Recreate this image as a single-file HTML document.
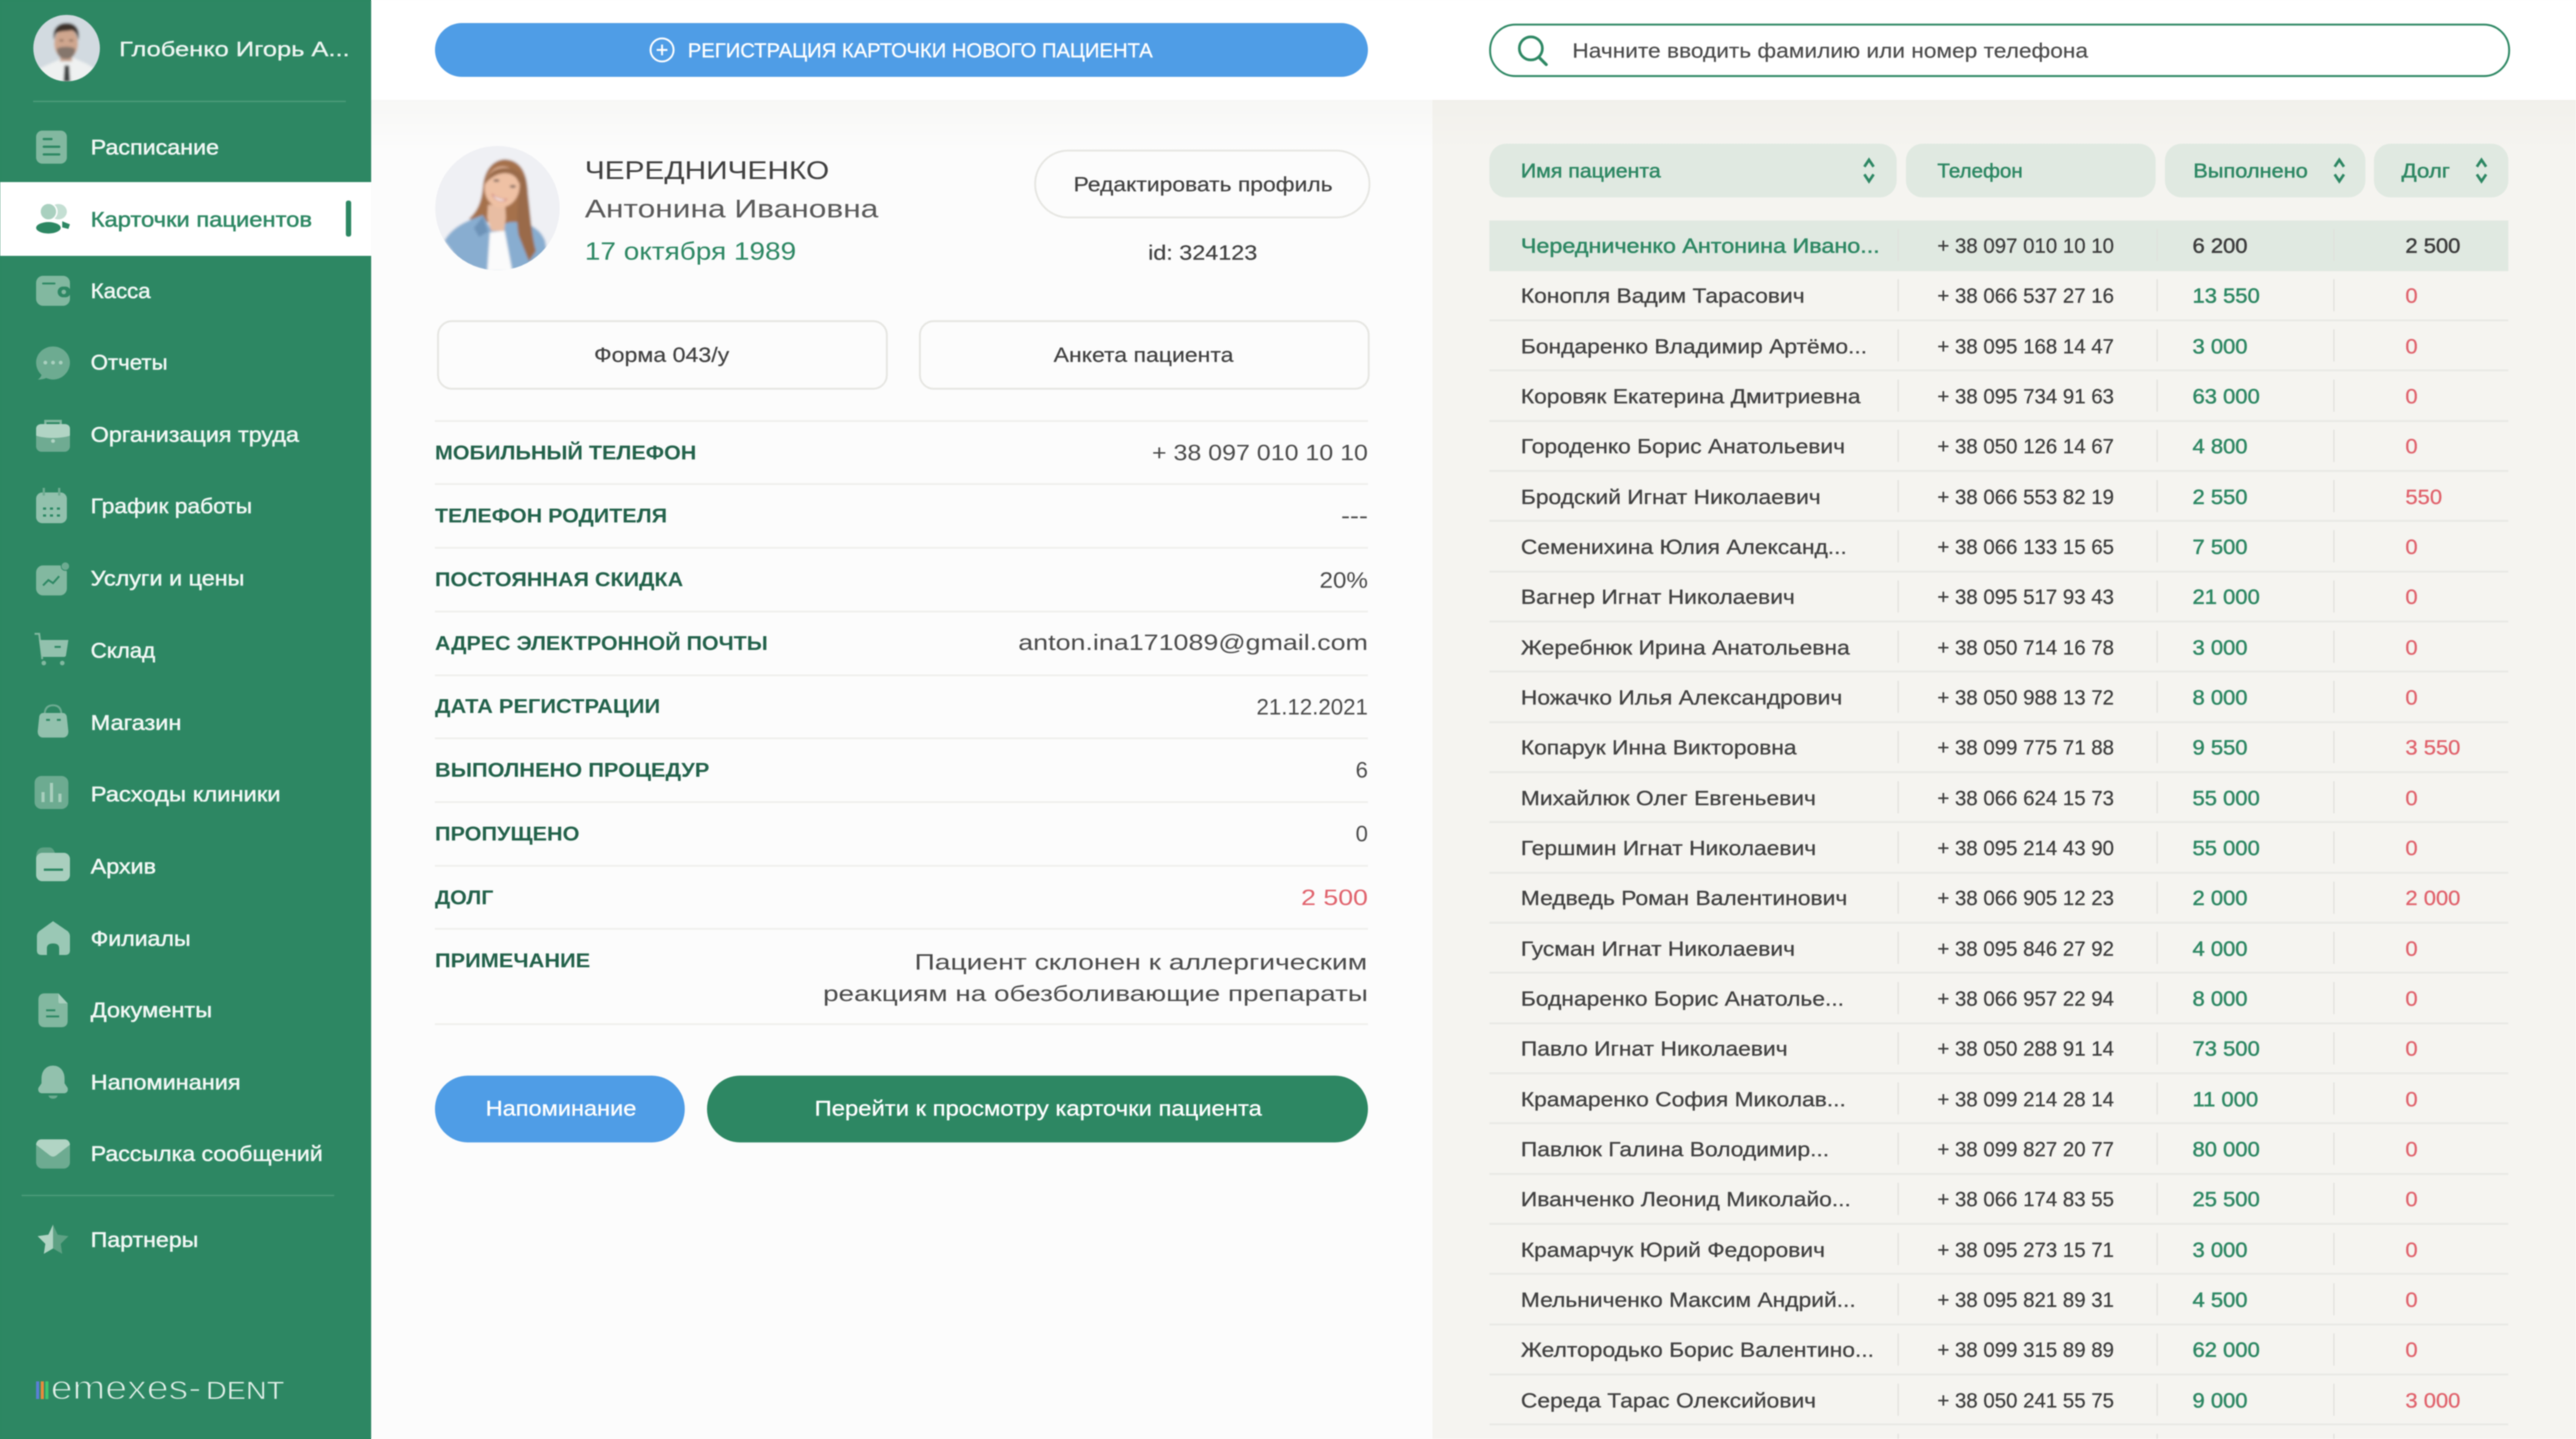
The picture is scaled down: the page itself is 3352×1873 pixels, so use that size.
<!DOCTYPE html>
<html lang="ru"><head><meta charset="utf-8"><title>Карточки пациентов</title>
<style>
html,body{margin:0;padding:0;width:3352px;height:1873px;overflow:hidden;background:linear-gradient(90deg,#2d8763 483px,#fcfcfc 483px)}
svg{display:block;font-family:"Liberation Sans","DejaVu Sans",sans-serif;filter:blur(.7px)}
.nav text{font-size:28px;fill:#f2f8f5;stroke:#f2f8f5;stroke-width:.6}
.lab text{font-size:25.5px;font-weight:bold;fill:#22614a}
.val text{font-size:29px;fill:#4a4a4a}
.names text{font-size:27px;fill:#404040;stroke:#404040;stroke-width:.35}
.ph text{font-size:27px;fill:#3c3c3c;stroke:#3c3c3c;stroke-width:.3}
.done text{font-size:27px;fill:#2d8763;stroke:#2d8763;stroke-width:.6}
.debt text{font-size:27px;fill:#e0626c;stroke:#e0626c;stroke-width:.35}
.hd text{font-size:26px;fill:#2d8763;stroke:#2d8763;stroke-width:.6}
</style></head><body>
<svg width="3352" height="1873" viewBox="0 0 3352 1873" xmlns="http://www.w3.org/2000/svg">
<defs>
<linearGradient id="gl" x1="0" y1="0" x2="0" y2="1"><stop offset="0" stop-color="#f7f7f5"/><stop offset="1" stop-color="#fcfcfc"/></linearGradient>
<linearGradient id="gr" x1="0" y1="0" x2="0" y2="1"><stop offset="0" stop-color="#f1f0eb"/><stop offset="1" stop-color="#f5f4f0"/></linearGradient>
<clipPath id="cm"><circle cx="170" cy="158" r="130"/></clipPath>
<clipPath id="cw"><circle cx="262" cy="273" r="243"/></clipPath>
<filter id="soft" x="-5%" y="-5%" width="110%" height="110%"><feGaussianBlur stdDeviation="5"/></filter>
</defs>
<rect width="3352" height="1873" fill="#fff"/>
<rect x="483" y="130" width="1381" height="1743" fill="#fcfcfc"/>
<rect x="483" y="130" width="1381" height="70" fill="url(#gl)"/>
<rect x="1864" y="130" width="1488" height="1743" fill="#f5f4f0"/>
<rect x="1864" y="130" width="1488" height="70" fill="url(#gr)"/>

<!-- sidebar -->
<rect width="483" height="1873" fill="#2d8763"/>
<rect y="237" width="483" height="96" fill="#fff"/>
<rect x="450" y="261" width="7" height="47" rx="3" fill="#2d8763"/>
<rect x="43" y="131" width="407" height="2" fill="#4a9a79"/>
<rect x="28" y="1555" width="407" height="2" fill="#4a9a79"/>

<!-- doctor avatar -->
<g clip-path="url(#cm)" transform="translate(30 10) scale(.3333)">
<g filter="url(#soft)">
<rect x="0" y="0" width="340" height="300" fill="#d2dae0"/>
<path d="M60 240C110 215 140 205 165 190L195 195C225 210 260 220 285 245V300H60Z" fill="#eff1f1"/>
<rect x="145" y="170" width="46" height="40" fill="#c7a593"/>
<ellipse cx="168" cy="140" rx="46" ry="62" fill="#cfa68e"/>
<path d="M120 125C112 80 140 58 172 60C205 60 225 85 216 128C212 108 205 92 190 88C170 92 145 90 132 98C125 105 124 115 120 125Z" fill="#3d3029"/>
<path d="M132 160C145 150 190 150 203 160C205 190 185 200 168 200C150 200 132 190 132 160Z" fill="#85766c"/>
<ellipse cx="150" cy="128" rx="8" ry="3" fill="#5e4638"/><ellipse cx="188" cy="128" rx="8" ry="3" fill="#5e4638"/>
<path d="M162 225H180L184 290H158Z" fill="#3a3d3e"/>
</g></g>
<text x="155" y="73" font-size="27" textLength="300" lengthAdjust="spacingAndGlyphs" fill="#eef6f2" stroke="#eef6f2" stroke-width=".4">Глобенко Игорь А...</text>

<!-- nav icons -->
<g>
<!-- 1 schedule -->
<rect x="47" y="170" width="40" height="43" rx="8" fill="#82b8a0"/>
<path d="M57 181H67M57 191H77M57 201H77" stroke="#2d8763" stroke-width="3" stroke-linecap="round" fill="none"/>
<!-- 2 patients -->
<ellipse cx="76" cy="275.500" rx="11" ry="10" fill="#c4dfd3"/>
<circle cx="63" cy="275.500" r="11" fill="#a9d0bf" stroke="#fff" stroke-width="2"/>
<ellipse cx="63" cy="296.500" rx="16" ry="7.500" fill="#2d8763"/>
<path d="M81 288L91 292L89 298L81 296Z" fill="#2d8763"/>
<!-- 3 wallet -->
<rect x="47" y="359" width="44" height="39" rx="9" fill="#82b8a0"/>
<path d="M56 369H71" stroke="#2d8763" stroke-width="2.500" stroke-linecap="round"/>
<rect x="75" y="373" width="17" height="14" rx="7" fill="#2d8763"/><circle cx="83" cy="380" r="3" fill="#82b8a0"/>
<!-- 4 reports -->
<path d="M69 451C57 451 47 460 47 472C47 479 50 484 54 488C53 491 51 493 49 494C54 494 58 493 60 492C63 493 66 494 69 494C81 494 91 484 91 472C91 460 81 451 69 451Z" fill="#6dab91"/>
<circle cx="59" cy="472" r="2.500" fill="#a9cfbe"/><circle cx="69" cy="472" r="2.500" fill="#a9cfbe"/><circle cx="79" cy="472" r="2.500" fill="#a9cfbe"/>
<!-- 5 briefcase -->
<path d="M59 552V548H79V552" stroke="#82b8a0" stroke-width="3" fill="none"/>
<rect x="47" y="552" width="44" height="36" rx="7" fill="#6fab92"/>
<path d="M47 558C47 554 50 552 54 552H84C88 552 91 554 91 558V567C80 571 58 571 47 567Z" fill="#b1d4c4"/>
<circle cx="69" cy="574" r="2.500" fill="#b1d4c4"/>
<!-- 6 calendar -->
<rect x="47" y="641" width="40" height="40" rx="8" fill="#92c1ad"/>
<path d="M57 635V645M77 635V645" stroke="#6dab91" stroke-width="3"/>
<path d="M56 662H60M65 662H69M74 662H78M56 671H60M65 671H69M74 671H78" stroke="#2d8763" stroke-width="3"/>
<!-- 7 services -->
<rect x="47" y="736" width="40" height="39" rx="9" fill="#82b8a0"/>
<circle cx="85" cy="737" r="5.500" fill="#6dab91" stroke="#2d8763" stroke-width="1"/>
<path d="M56 762L63 755L69 759L77 750" stroke="#2d8763" stroke-width="2.500" fill="none"/>
<!-- 8 cart -->
<path d="M45 825H51L55 858" stroke="#82b8a0" stroke-width="2.500" fill="none"/>
<path d="M51 833H89L86 852C86 855 84 855 82 855H57C55 855 54 854 54 852Z" fill="#92c1ad"/>
<path d="M71 842H79" stroke="#2d8763" stroke-width="2.500"/>
<circle cx="57" cy="863" r="3" fill="#82b8a0"/><circle cx="81" cy="863" r="3" fill="#82b8a0"/>
<!-- 9 bag -->
<path d="M58 931C58 921 63 918 69 918C75 918 80 921 80 931" stroke="#6dab91" stroke-width="2.500" fill="none"/>
<path d="M56 928H82C85 928 87 931 87 934L89 952C89 957 86 960 82 960H56C52 960 49 957 49 952L51 934C51 931 53 928 56 928Z" fill="#92c1ad"/>
<path d="M60 937H65M74 937H79" stroke="#2d8763" stroke-width="2.500"/>
<!-- 10 expenses -->
<rect x="45" y="1010" width="44" height="43" rx="9" fill="#6dab91"/>
<path d="M56 1031V1044M67 1019V1044M78 1033V1044" stroke="#a9cfbe" stroke-width="4"/>
<!-- 11 archive -->
<path d="M47 1115C47 1107 51 1103 57 1103H64C68 1103 70 1106 72 1111V1120H47Z" fill="#5ea184"/>
<rect x="47" y="1110" width="44" height="37" rx="8" fill="#a9cfbe"/>
<path d="M57 1132H82" stroke="#2d8763" stroke-width="3"/>
<!-- 12 branches -->
<path d="M69 1199L88 1212C90 1214 91 1216 91 1219V1237C91 1241 89 1243 85 1243H77V1234C77 1230 74 1228 69 1228C64 1228 61 1230 61 1234V1243H54C50 1243 48 1241 48 1237V1219C48 1216 49 1214 51 1212Z" fill="#9ac8b5"/>
<!-- 13 documents -->
<path d="M58 1293H76L88 1306V1329C88 1334 85 1337 80 1337H58C53 1337 50 1334 50 1329V1301C50 1296 53 1293 58 1293Z" fill="#82b8a0"/>
<path d="M76 1293L88 1306H78C76 1306 76 1304 76 1302Z" fill="#a9cfbe"/>
<path d="M60 1315H72M60 1323H77" stroke="#2d8763" stroke-width="2.500"/>
<!-- 14 bell -->
<path d="M69 1387C78 1387 84 1394 84 1404V1410L88 1416C89 1420 87 1423 83 1423H55C51 1423 49 1420 50 1416L54 1410V1404C54 1394 60 1387 69 1387Z" fill="#92c1ad"/>
<path d="M63 1426H75C74 1429 72 1430 69 1430C66 1430 64 1429 63 1426Z" fill="#6dab91"/>
<!-- 15 mail -->
<rect x="47" y="1483" width="44" height="38" rx="8" fill="#6dab91"/>
<path d="M47 1490C47 1486 50 1483 54 1483H84C88 1483 91 1486 91 1490L73 1504C70 1506 68 1506 65 1504Z" fill="#b1d4c4"/>
<!-- 16 star -->
<path d="M69 1594L75 1607L89 1609L79 1619L81 1632L69 1625Z" fill="#5ea184"/>
<path d="M69 1594L63 1607L49 1609L59 1619L57 1632L69 1625Z" fill="#b1d4c4"/>
</g>

<g class="nav">
<text x="118" y="201" textLength="167" lengthAdjust="spacingAndGlyphs">Расписание</text>
<text x="118" y="295" textLength="288" lengthAdjust="spacingAndGlyphs" style="fill:#2d8763;stroke:#2d8763">Карточки пациентов</text>
<text x="118" y="388" textLength="78" lengthAdjust="spacingAndGlyphs">Касса</text>
<text x="118" y="481" textLength="100" lengthAdjust="spacingAndGlyphs">Отчеты</text>
<text x="118" y="575" textLength="271" lengthAdjust="spacingAndGlyphs">Организация труда</text>
<text x="118" y="668" textLength="210" lengthAdjust="spacingAndGlyphs">График работы</text>
<text x="118" y="762" textLength="200" lengthAdjust="spacingAndGlyphs">Услуги и цены</text>
<text x="118" y="856" textLength="84" lengthAdjust="spacingAndGlyphs">Склад</text>
<text x="118" y="950" textLength="118" lengthAdjust="spacingAndGlyphs">Магазин</text>
<text x="118" y="1043" textLength="247" lengthAdjust="spacingAndGlyphs">Расходы клиники</text>
<text x="118" y="1137" textLength="85" lengthAdjust="spacingAndGlyphs">Архив</text>
<text x="118" y="1231" textLength="130" lengthAdjust="spacingAndGlyphs">Филиалы</text>
<text x="118" y="1324" textLength="158" lengthAdjust="spacingAndGlyphs">Документы</text>
<text x="118" y="1418" textLength="195" lengthAdjust="spacingAndGlyphs">Напоминания</text>
<text x="118" y="1511" textLength="302" lengthAdjust="spacingAndGlyphs">Рассылка сообщений</text>
<text x="118" y="1623" textLength="140" lengthAdjust="spacingAndGlyphs">Партнеры</text>
</g>

<!-- logo -->
<rect x="47" y="1798" width="4" height="23" fill="#5a7fd6"/><rect x="53" y="1798" width="4" height="23" fill="#ea8a3c"/><rect x="59" y="1798" width="4" height="23" fill="#3fc76f"/>
<text x="66" y="1821" font-size="44" textLength="196" lengthAdjust="spacingAndGlyphs" fill="#e2f0e9" stroke="#2d8763" stroke-width="1.400" paint-order="fill">emexes-</text>
<text x="268" y="1821" font-size="32" textLength="102" lengthAdjust="spacingAndGlyphs" fill="#e2f0e9" stroke="#2d8763" stroke-width=".6" paint-order="fill">DENT</text>

<!-- top controls -->
<rect x="566" y="30" width="1214" height="70" rx="35" fill="#4f9de6"/>
<circle cx="861.500" cy="65" r="15" fill="none" stroke="#fff" stroke-width="2.500"/>
<path d="M861.500 58V72M854.500 65H868.500" stroke="#fff" stroke-width="2.500"/>
<text x="895" y="74.500" font-size="26" textLength="605" lengthAdjust="spacingAndGlyphs" fill="#fff" stroke="#fff" stroke-width=".4">РЕГИСТРАЦИЯ КАРТОЧКИ НОВОГО ПАЦИЕНТА</text>

<rect x="1939" y="32" width="1326" height="67" rx="33" fill="#fff" stroke="#2d8763" stroke-width="2.500"/>
<circle cx="1992" cy="63" r="15" fill="none" stroke="#2d8763" stroke-width="3.500"/>
<path d="M2003 75L2012 84" stroke="#2d8763" stroke-width="4" stroke-linecap="round"/>
<text x="2046" y="75" font-size="27" textLength="671" lengthAdjust="spacingAndGlyphs" fill="#4a4a4a" stroke="#4a4a4a" stroke-width=".2">Начните вводить фамилию или номер телефона</text>

<!-- patient avatar -->
<g clip-path="url(#cw)" transform="translate(560 180) scale(.3333)">
<g filter="url(#soft)">
<rect x="0" y="0" width="540" height="540" fill="#eff0f4"/>
<path d="M290 82C240 85 210 130 205 190C200 240 190 280 150 315L300 340L340 440L385 480L412 440C390 360 385 280 380 200C375 130 350 85 290 82Z" fill="#a5714c"/>
<path d="M55 400C90 340 150 320 205 300L240 360L300 330C340 320 420 330 448 400L455 445L400 500L260 530L120 490Z" fill="#88add0"/>
<path d="M170 350L205 305L225 365L190 385Z" fill="#6d93b8"/>
<path d="M232 368L290 360L320 520H222Z" fill="#fbfbfb"/>
<path d="M225 260L222 310L238 362L288 362L295 310L292 260Z" fill="#e8bda3"/>
<path d="M340 150C350 250 330 300 345 380L385 480L412 440C390 360 390 250 370 150Z" fill="#9a6a48"/>
<ellipse cx="280" cy="190" rx="68" ry="80" fill="#efc1a4" transform="rotate(10 280 190)"/>
<path d="M212 180C225 118 290 95 350 135C360 150 352 165 345 175C335 130 265 115 212 180Z" fill="#9a6a48"/>
<ellipse cx="258" cy="165" rx="12" ry="5" fill="#6f5a52"/><ellipse cx="322" cy="188" rx="12" ry="5" fill="#6f5a52"/>
<path d="M240 217C258 232 278 240 298 238C282 252 252 246 240 217Z" fill="#fff" stroke="#c9736e" stroke-width="3"/>
</g></g>

<text x="761" y="233" font-size="33" textLength="318" lengthAdjust="spacingAndGlyphs" fill="#3f3f3f">ЧЕРЕДНИЧЕНКО</text>
<text x="761" y="283" font-size="33" textLength="382" lengthAdjust="spacingAndGlyphs" fill="#595959">Антонина Ивановна</text>
<text x="761" y="338" font-size="32" textLength="275" lengthAdjust="spacingAndGlyphs" fill="#2d8763">17 октября 1989</text>

<rect x="1347" y="196" width="435" height="87" rx="43" fill="#fcfcfc" stroke="#e6e6e2" stroke-width="2.500"/>
<text x="1397" y="249" font-size="27" textLength="337" lengthAdjust="spacingAndGlyphs" fill="#404040" stroke="#404040" stroke-width=".25">Редактировать профиль</text>
<text x="1494" y="338" font-size="27" textLength="142" lengthAdjust="spacingAndGlyphs" fill="#404040" stroke="#404040" stroke-width=".25">id: 324123</text>

<rect x="570" y="418" width="584" height="88" rx="18" fill="#fcfcfc" stroke="#e6e6e2" stroke-width="2.500"/>
<rect x="1197" y="418" width="584" height="88" rx="18" fill="#fcfcfc" stroke="#e6e6e2" stroke-width="2.500"/>
<text x="773" y="471" font-size="27" textLength="176" lengthAdjust="spacingAndGlyphs" fill="#404040" stroke="#404040" stroke-width=".25">Форма 043/у</text>
<text x="1371" y="471" font-size="27" textLength="234" lengthAdjust="spacingAndGlyphs" fill="#404040" stroke="#404040" stroke-width=".25">Анкета пациента</text>

<!-- details -->
<path d="M566 548H1780M566 630H1780M566 713H1780M566 796H1780M566 879H1780M566 961H1780M566 1044H1780M566 1127H1780M566 1209H1780M566 1333H1780" stroke="#efefed" stroke-width="2.500" fill="none"/>
<g class="lab">
<text x="566" y="598" textLength="340" lengthAdjust="spacingAndGlyphs">МОБИЛЬНЫЙ ТЕЛЕФОН</text>
<text x="566" y="680" textLength="302" lengthAdjust="spacingAndGlyphs">ТЕЛЕФОН РОДИТЕЛЯ</text>
<text x="566" y="763" textLength="323" lengthAdjust="spacingAndGlyphs">ПОСТОЯННАЯ СКИДКА</text>
<text x="566" y="846" textLength="433" lengthAdjust="spacingAndGlyphs">АДРЕС ЭЛЕКТРОННОЙ ПОЧТЫ</text>
<text x="566" y="928" textLength="293" lengthAdjust="spacingAndGlyphs">ДАТА РЕГИСТРАЦИИ</text>
<text x="566" y="1011" textLength="357" lengthAdjust="spacingAndGlyphs">ВЫПОЛНЕНО ПРОЦЕДУР</text>
<text x="566" y="1094" textLength="188" lengthAdjust="spacingAndGlyphs">ПРОПУЩЕНО</text>
<text x="566" y="1177" textLength="76" lengthAdjust="spacingAndGlyphs">ДОЛГ</text>
<text x="566" y="1259" textLength="202" lengthAdjust="spacingAndGlyphs">ПРИМЕЧАНИЕ</text>
</g>
<g class="val">
<text x="1499" y="599" textLength="281" lengthAdjust="spacingAndGlyphs">+ 38 097 010 10 10</text>
<text x="1745" y="681" textLength="35" lengthAdjust="spacingAndGlyphs">---</text>
<text x="1717" y="765" textLength="63" lengthAdjust="spacingAndGlyphs">20%</text>
<text x="1325" y="846" textLength="455" lengthAdjust="spacingAndGlyphs">anton.ina171089@gmail.com</text>
<text x="1635" y="930" textLength="145" lengthAdjust="spacingAndGlyphs">21.12.2021</text>
<text x="1764" y="1012" textLength="16" lengthAdjust="spacingAndGlyphs">6</text>
<text x="1764" y="1095" textLength="16" lengthAdjust="spacingAndGlyphs">0</text>
<text x="1693" y="1178" textLength="87" lengthAdjust="spacingAndGlyphs" style="fill:#e0626c">2 500</text>
<text x="1190" y="1262" textLength="589" lengthAdjust="spacingAndGlyphs">Пациент склонен к аллергическим</text>
<text x="1071" y="1303" textLength="709" lengthAdjust="spacingAndGlyphs">реакциям на обезболивающие препараты</text>
</g>

<rect x="566" y="1400" width="325" height="87" rx="43" fill="#4f9de6"/>
<rect x="920" y="1400" width="860" height="87" rx="43" fill="#2d8763"/>
<text x="632" y="1452" font-size="28" textLength="196" lengthAdjust="spacingAndGlyphs" fill="#fff" stroke="#fff" stroke-width=".4">Напоминание</text>
<text x="1060" y="1452" font-size="28" textLength="582" lengthAdjust="spacingAndGlyphs" fill="#fff" stroke="#fff" stroke-width=".4">Перейти к просмотру карточки пациента</text>

<!-- table header -->
<g fill="#e0e9e1">
<rect x="1938" y="187" width="530" height="70" rx="22"/>
<rect x="2480" y="187" width="325" height="70" rx="22"/>
<rect x="2817" y="187" width="261" height="70" rx="22"/>
<rect x="3089" y="187" width="175" height="70" rx="22"/>
<rect x="1938" y="287" width="1326" height="66"/>
</g>
<g class="hd">
<text x="1979" y="231" textLength="182" lengthAdjust="spacingAndGlyphs">Имя пациента</text>
<text x="2521" y="231" textLength="111" lengthAdjust="spacingAndGlyphs">Телефон</text>
<text x="2854" y="231" textLength="149" lengthAdjust="spacingAndGlyphs">Выполнено</text>
<text x="3125" y="231" textLength="63" lengthAdjust="spacingAndGlyphs">Долг</text>
</g>
<path d="M2426 217L2432 208L2438 217M2426 227L2432 236L2438 227M3038 217L3044 208L3050 217M3038 227L3044 236L3050 227M3223 217L3229 208L3235 217M3223 227L3229 236L3235 227" fill="none" stroke="#2d8763" stroke-width="3.500"/>

<!-- table lines -->
<path d="M1938 417H3264M1938 482H3264M1938 548H3264M1938 613H3264M1938 678H3264M1938 744H3264M1938 809H3264M1938 874H3264M1938 940H3264M1938 1005H3264M1938 1070H3264M1938 1136H3264M1938 1201H3264M1938 1266H3264M1938 1332H3264M1938 1397H3264M1938 1462H3264M1938 1528H3264M1938 1593H3264M1938 1658H3264M1938 1724H3264M1938 1789H3264M1938 1854H3264" stroke="#e9e9e5" stroke-width="2.500" fill="none"/>
<path d="M2470 298V1873M2807 298V1873M3037 298V1873" stroke="#e0e0db" stroke-width="1.500" stroke-dasharray="42 23.340" fill="none"/>

<g class="names" transform="translate(1979 0) scale(1.1 1)">
<text x="0" y="329" textLength="424.500" lengthAdjust="spacingAndGlyphs" style="fill:#2d8763;stroke:#2d8763;stroke-width:.6">Чередниченко Антонина Ивано...</text>
<text x="0" y="394">Конопля Вадим Тарасович</text>
<text x="0" y="460">Бондаренко Владимир Артёмо...</text>
<text x="0" y="525">Коровяк Екатерина Дмитриевна</text>
<text x="0" y="590">Городенко Борис Анатольевич</text>
<text x="0" y="656">Бродский Игнат Николаевич</text>
<text x="0" y="721">Семенихина Юлия Александ...</text>
<text x="0" y="786">Вагнер Игнат Николаевич</text>
<text x="0" y="852">Жеребнюк Ирина Анатольевна</text>
<text x="0" y="917">Ножачко Илья Александрович</text>
<text x="0" y="982">Копарук Инна Викторовна</text>
<text x="0" y="1048">Михайлюк Олег Евгеньевич</text>
<text x="0" y="1113">Гершмин Игнат Николаевич</text>
<text x="0" y="1178">Медведь Роман Валентинович</text>
<text x="0" y="1244">Гусман Игнат Николаевич</text>
<text x="0" y="1309">Боднаренко Борис Анатолье...</text>
<text x="0" y="1374">Павло Игнат Николаевич</text>
<text x="0" y="1440">Крамаренко София Миколав...</text>
<text x="0" y="1505">Павлюк Галина Володимир...</text>
<text x="0" y="1570">Иванченко Леонид Миколайо...</text>
<text x="0" y="1636">Крамарчук Юрий Федорович</text>
<text x="0" y="1701">Мельниченко Максим Андрий...</text>
<text x="0" y="1766">Желтородько Борис Валентино...</text>
<text x="0" y="1832">Середа Тарас Олексийович</text>
</g>
<g class="ph" transform="translate(2521 0) scale(.985 1)">
<text x="0" y="329">+ 38 097 010 10 10</text>
<text x="0" y="394">+ 38 066 537 27 16</text>
<text x="0" y="460">+ 38 095 168 14 47</text>
<text x="0" y="525">+ 38 095 734 91 63</text>
<text x="0" y="590">+ 38 050 126 14 67</text>
<text x="0" y="656">+ 38 066 553 82 19</text>
<text x="0" y="721">+ 38 066 133 15 65</text>
<text x="0" y="786">+ 38 095 517 93 43</text>
<text x="0" y="852">+ 38 050 714 16 78</text>
<text x="0" y="917">+ 38 050 988 13 72</text>
<text x="0" y="982">+ 38 099 775 71 88</text>
<text x="0" y="1048">+ 38 066 624 15 73</text>
<text x="0" y="1113">+ 38 095 214 43 90</text>
<text x="0" y="1178">+ 38 066 905 12 23</text>
<text x="0" y="1244">+ 38 095 846 27 92</text>
<text x="0" y="1309">+ 38 066 957 22 94</text>
<text x="0" y="1374">+ 38 050 288 91 14</text>
<text x="0" y="1440">+ 38 099 214 28 14</text>
<text x="0" y="1505">+ 38 099 827 20 77</text>
<text x="0" y="1570">+ 38 066 174 83 55</text>
<text x="0" y="1636">+ 38 095 273 15 71</text>
<text x="0" y="1701">+ 38 095 821 89 31</text>
<text x="0" y="1766">+ 38 099 315 89 89</text>
<text x="0" y="1832">+ 38 050 241 55 75</text>
</g>
<g class="done" transform="translate(2853 0) scale(1.06 1)">
<text x="0" y="329" style="fill:#3c3c3c;stroke:#3c3c3c">6 200</text>
<text x="0" y="394">13 550</text>
<text x="0" y="460">3 000</text>
<text x="0" y="525">63 000</text>
<text x="0" y="590">4 800</text>
<text x="0" y="656">2 550</text>
<text x="0" y="721">7 500</text>
<text x="0" y="786">21 000</text>
<text x="0" y="852">3 000</text>
<text x="0" y="917">8 000</text>
<text x="0" y="982">9 550</text>
<text x="0" y="1048">55 000</text>
<text x="0" y="1113">55 000</text>
<text x="0" y="1178">2 000</text>
<text x="0" y="1244">4 000</text>
<text x="0" y="1309">8 000</text>
<text x="0" y="1374">73 500</text>
<text x="0" y="1440">11 000</text>
<text x="0" y="1505">80 000</text>
<text x="0" y="1570">25 500</text>
<text x="0" y="1636">3 000</text>
<text x="0" y="1701">4 500</text>
<text x="0" y="1766">62 000</text>
<text x="0" y="1832">9 000</text>
</g>
<g class="debt" transform="translate(3130 0) scale(1.06 1)">
<text x="0" y="329" style="fill:#3c3c3c;stroke:#3c3c3c;stroke-width:.6">2 500</text>
<text x="0" y="394">0</text>
<text x="0" y="460">0</text>
<text x="0" y="525">0</text>
<text x="0" y="590">0</text>
<text x="0" y="656">550</text>
<text x="0" y="721">0</text>
<text x="0" y="786">0</text>
<text x="0" y="852">0</text>
<text x="0" y="917">0</text>
<text x="0" y="982">3 550</text>
<text x="0" y="1048">0</text>
<text x="0" y="1113">0</text>
<text x="0" y="1178">2 000</text>
<text x="0" y="1244">0</text>
<text x="0" y="1309">0</text>
<text x="0" y="1374">0</text>
<text x="0" y="1440">0</text>
<text x="0" y="1505">0</text>
<text x="0" y="1570">0</text>
<text x="0" y="1636">0</text>
<text x="0" y="1701">0</text>
<text x="0" y="1766">0</text>
<text x="0" y="1832">3 000</text>
</g>
</svg>
</body></html>
